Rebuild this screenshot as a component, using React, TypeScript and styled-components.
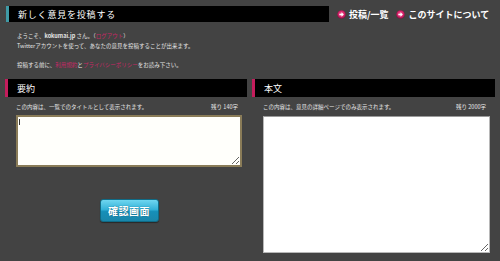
import React from "react";
import styled, { createGlobalStyle } from "styled-components";

const Global = createGlobalStyle`
  html, body { margin: 0; padding: 0; background: #434343; }
  body { font-family: "Noto Sans CJK JP", "Noto Sans", sans-serif; }
`;

const Page = styled.div`
  width: 500px;
  height: 261px;
  box-sizing: border-box;
  background: #434343;
  padding: 6px 5px 0 5px;
  color: #e4e4e4;
  overflow: hidden;
`;

const TopRow = styled.div`
  display: flex;
  align-items: center;
  height: 16px;
`;

const TitleBar = styled.div`
  width: 323px;
  height: 16px;
  box-sizing: border-box;
  background: #000;
  border-left: 3px solid #3f9aa6;
  margin-left: 1px;
  padding-left: 9px;
  display: flex;
  align-items: center;
  font-size: 9px;
  letter-spacing: 0.8px;
  font-weight: 400;
  color: #fff;
  line-height: 1;
`;

const Nav = styled.nav`
  display: flex;
  align-items: center;
  margin-left: 8px;
  gap: 8px;
`;

const NavLink = styled.a`
  display: flex;
  align-items: center;
  gap: 3px;
  color: #fff;
  font-size: 9px;
  font-weight: 700;
  letter-spacing: 0;
  text-decoration: none;
  line-height: 1;
`;

const Intro = styled.div`
  padding: 9px 0 0 12px;
  font-size: 5.5px;
  line-height: 10px;
  color: #e6e6e6;
`;

const Line = styled.p<{ $gap?: boolean }>`
  margin: 0;
  margin-top: ${(p) => (p.$gap ? "9px" : "0")};
  white-space: nowrap;
`;

const Pink = styled.a`
  color: #c82866;
  text-decoration: none;
`;

const Columns = styled.div`
  display: grid;
  grid-template-columns: 242px 243px;
  gap: 5px;
  margin-top: 9px;
`;

const Column = styled.section`
  display: flex;
  flex-direction: column;
`;

const SectionHead = styled.h2`
  margin: 0;
  height: 18px;
  box-sizing: border-box;
  background: #000;
  border-left: 3px solid #c41d5c;
  padding-left: 9px;
  display: flex;
  align-items: center;
  font-size: 9px;
  font-weight: 400;
  color: #fff;
  line-height: 1;
`;

const Body = styled.div`
  padding: 0 5px 0 11px;
  display: flex;
  flex-direction: column;
`;

const Hint = styled.div`
  display: flex;
  justify-content: space-between;
  font-size: 5.5px;
  line-height: 8px;
  color: #e6e6e6;
  margin-top: 6px;
  padding-right: 4px;
  white-space: nowrap;
`;

const Area = styled.textarea<{ $h: number; $focus?: boolean }>`
  display: block;
  box-sizing: border-box;
  width: 100%;
  height: ${(p) => p.$h}px;
  margin-top: ${(p) => (p.$focus ? "4px" : "5px")};
  border: ${(p) => (p.$focus ? "2px solid #8a7c58" : "1px solid #b8b8b8")};
  border-top-color: ${(p) => (p.$focus ? "#8a7c58" : "#9a9a9a")};
  background: ${(p) => (p.$focus ? "#fffffb" : "#ffffff")};
  resize: both;
  outline: none;
  padding: 2px;
  font-size: 6px;
`;

const AreaWrap = styled.div`
  position: relative;
`;

const Caret = styled.span`
  position: absolute;
  left: 3px;
  top: 8px;
  width: 1px;
  height: 6px;
  background: #333;
`;

const ButtonRow = styled.div`
  display: flex;
  justify-content: center;
  margin-top: 32px;
`;

const ConfirmButton = styled.button`
  width: 59px;
  height: 23px;
  border: 1px solid #0f6b86;
  border-radius: 3px;
  background: linear-gradient(#6fd6f0 0%, #34b2d8 45%, #168fb8 55%, #1a86aa 100%);
  color: #fff;
  font-family: "Noto Sans CJK JP", sans-serif;
  font-weight: 700;
  font-size: 10px;
  letter-spacing: 0.5px;
  padding: 0;
  text-shadow: 0 0 1px #0a4b60;
  box-shadow: 0 1px 1px rgba(0, 0, 0, 0.4);
  cursor: pointer;
`;

const ArrowIcon = () => (
  <svg width="9" height="9" viewBox="0 0 10 10">
    <defs>
      <radialGradient id="pg" cx="50%" cy="45%" r="55%">
        <stop offset="0%" stopColor="#ff6fa3" />
        <stop offset="60%" stopColor="#d8246a" />
        <stop offset="100%" stopColor="#7a1040" />
      </radialGradient>
    </defs>
    <circle cx="5" cy="5" r="4.8" fill="url(#pg)" />
    <path d="M2.6 4.2h2.4V2.6L7.6 5 5 7.4V5.8H2.6z" fill="#fff" />
  </svg>
);

export default function App() {
  return (
    <Page>
      <Global />
      <TopRow>
        <TitleBar>新しく意見を投稿する</TitleBar>
        <Nav>
          <NavLink href="#">
            <ArrowIcon />
            投稿/一覧
          </NavLink>
          <NavLink href="#">
            <ArrowIcon />
            このサイトについて
          </NavLink>
        </Nav>
      </TopRow>
      <Intro>
        <Line>
          ようこそ、<b>kokumai.jp</b> さん。（<Pink href="#">ログアウト</Pink>）
        </Line>
        <Line>Twitterアカウントを使って、あなたの意見を投稿することが出来ます。</Line>
        <Line $gap>
          投稿する前に、<Pink href="#">利用規約</Pink>と<Pink href="#">プライバシーポリシー</Pink>をお読み下さい。
        </Line>
      </Intro>
      <Columns>
        <Column>
          <SectionHead>要約</SectionHead>
          <Body>
            <Hint>
              <span>この内容は、一覧でのタイトルとして表示されます。</span>
              <span>残り 140字</span>
            </Hint>
            <AreaWrap>
              <Area $h={52} $focus />
              <Caret />
            </AreaWrap>
            <ButtonRow>
              <ConfirmButton>確認画面</ConfirmButton>
            </ButtonRow>
          </Body>
        </Column>
        <Column>
          <SectionHead>本文</SectionHead>
          <Body>
            <Hint>
              <span>この内容は、意見の詳細ページでのみ表示されます。</span>
              <span>残り 2000字</span>
            </Hint>
            <Area $h={137} />
          </Body>
        </Column>
      </Columns>
    </Page>
  );
}
